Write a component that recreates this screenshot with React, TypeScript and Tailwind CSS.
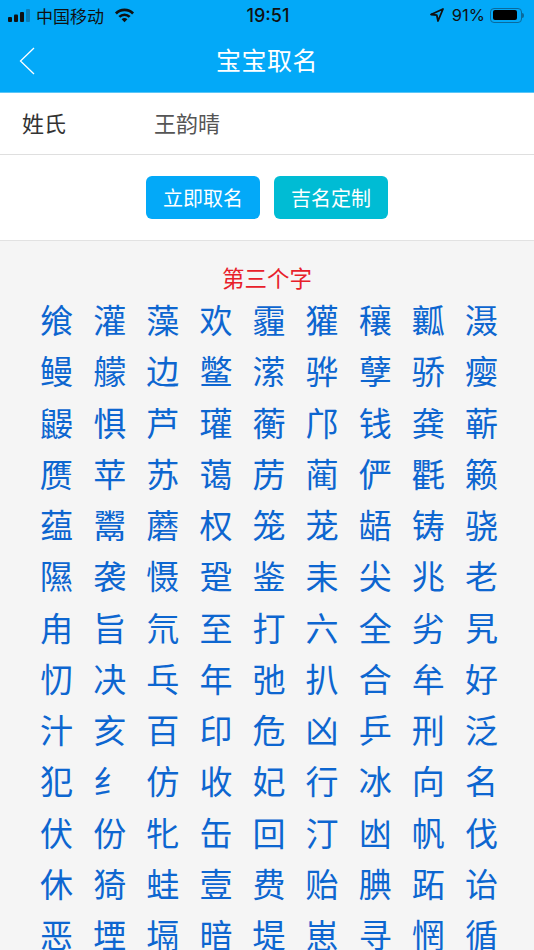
import React from 'react';

const chars = [
  '飨灌藻欢霾獾穰瓤滠',
  '鳗艨边鳖潆骅孽骄瘿',
  '鼹惧芦瓘蘅邝钱龚蕲',
  '赝苹苏蔼苈蔺俨氍籁',
  '蕴鬻蘑权笼茏龉铸骁',
  '隰袭慑跫鉴耒尖兆老',
  '甪旨氘至打六全劣旯',
  '忉决乓年弛扒合牟好',
  '汁亥百印危凶乒刑泛',
  '犯纟仿收妃行冰向名',
  '伏份牝缶回汀凼帆伐',
  '休猗蛙壹费贻腆跖诒',
  '恶堙塥暗堤崽寻惘循',
];

const font = "font-['Noto_Sans_CJK_SC','Liberation_Sans',sans-serif]";

const StatusBar = () => (
  <div className="flex h-[30px] items-center justify-between pl-2 pr-[10px] text-[#111]">
    <div className="flex w-[170px] items-center gap-[4px]">
      <svg width="24" height="14" viewBox="0 0 24 14">
        <rect x="0" y="9" width="4" height="5" rx="1" fill="#111" />
        <rect x="6" y="6.5" width="4" height="7.5" rx="1" fill="#111" />
        <rect x="12" y="4" width="4" height="10" rx="1" fill="#111" />
        <rect x="18" y="1" width="4" height="13" rx="1" fill="#0b7cb5" />
      </svg>
      <span className="text-[17px] leading-none">中国移动</span>
      <svg width="21" height="16" viewBox="0 0 22 16" className="ml-[6px]">
        <path d="M1 5.500a14 14 0 0 1 20 0l-2 2a11 11 0 0 0-16 0z" fill="#111" />
        <path d="M4.600 9a9 9 0 0 1 12.800 0l-2 2a6 6 0 0 0-8.800 0z" fill="#111" />
        <path d="M8 12.400a4.200 4.200 0 0 1 6 0L11 15.500z" fill="#111" />
      </svg>
    </div>
    <span className="pl-[4px] pt-[2px] font-['Inter',sans-serif] text-[18px] font-medium leading-none">19:51</span>
    <div className="flex w-[170px] items-center justify-end">
      <svg width="14" height="14" viewBox="0 0 14 14" className="mr-[8px]">
        <path d="M13 1 1 6.500l5.800.7L8 13z" fill="none" stroke="#111" strokeWidth="1.800" strokeLinejoin="round" />
      </svg>
      <span className="mr-[5px] font-['Inter',sans-serif] text-[16.500px] leading-none">91%</span>
      <div className="flex items-center">
        <div className="h-[15px] w-[32px] rounded-[4px] border border-[#0b6a9c] p-[1.500px]">
          <div className="h-full w-[90%] rounded-[2px] bg-black" />
        </div>
        <div className="h-[5px] w-[2px] rounded-r-sm bg-[#0b6a9c]" />
      </div>
    </div>
  </div>
);

export default function App() {
  return (
    <div className={`flex h-[950px] w-[534px] flex-col overflow-hidden bg-[#f5f5f5] ${font}`}>
      <div className="h-[93px] shrink-0 border-b border-[#5cc6f7] bg-[#03a9f8]">
        <StatusBar />
        <div className="relative flex h-[60px] items-center justify-center">
          <svg width="16" height="28" viewBox="0 0 16 28" className="absolute left-[19px] top-[17px]">
            <path d="M15 1 1.500 14 15 27" fill="none" stroke="white" strokeWidth="1.300" />
          </svg>
          <span className="pb-[2px] text-[25px] leading-none tracking-[0.5px] text-white">宝宝取名</span>
        </div>
      </div>
      <div className="flex h-[62px] shrink-0 items-center border-b border-[#dfdfdf] bg-white pb-[4px] pl-[22px] text-[22px] leading-none">
        <span className="w-[132px] text-[#333]">姓氏</span>
        <span className="text-[#555]">王韵晴</span>
      </div>
      <div className="flex h-[86px] shrink-0 items-center justify-center gap-[14px] border-b border-[#e2e2e2] bg-white">
        <button className="h-[43px] w-[114px] rounded-md bg-[#03a9f8] text-[20px] leading-none text-white">立即取名</button>
        <button className="h-[43px] w-[114px] rounded-md bg-[#00bcd4] text-[20px] leading-none text-white">吉名定制</button>
      </div>
      <div className="flex flex-col pt-[23px]">
        <div className="mb-[4px] h-[26px] text-center text-[22.500px] leading-[26px] text-[#e8202a]">第三个字</div>
        <div className="ml-[30px] grid w-[478px] grid-cols-9">
          {chars.join('').split('').map((c, i) => (
            <div key={i} className="flex h-[51.250px] items-center justify-center text-[33px] leading-none text-[#0d66d0]">
              {c}
            </div>
          ))}
        </div>
      </div>
    </div>
  );
}
